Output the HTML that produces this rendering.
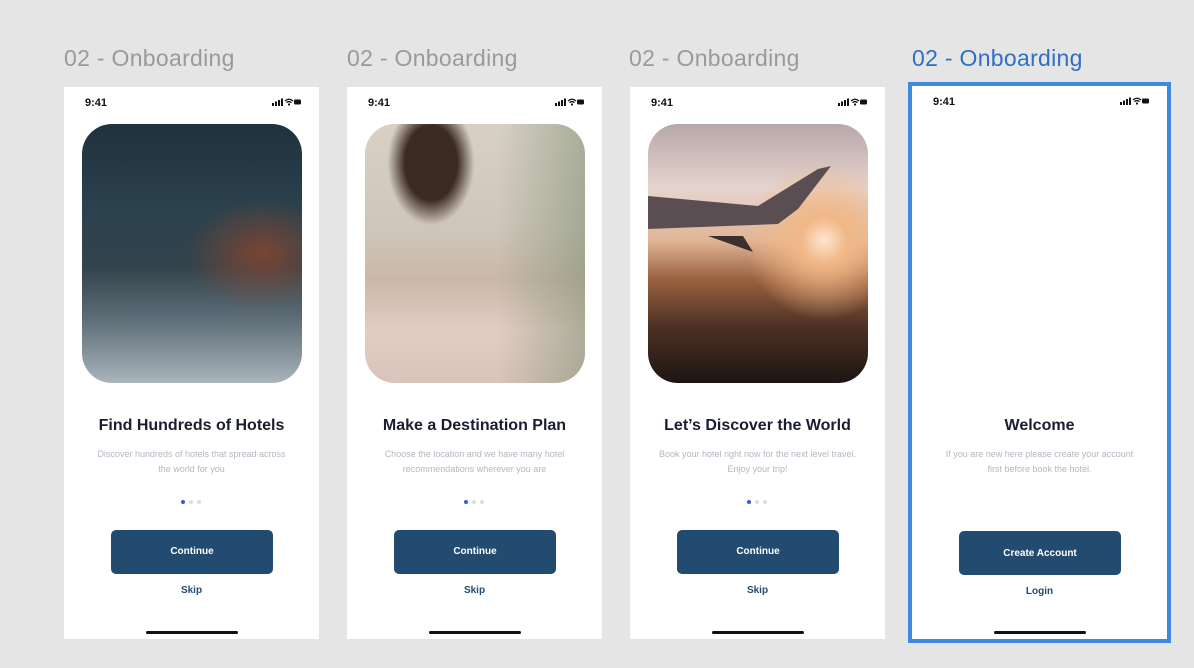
<!DOCTYPE html><html><head><style>
body{margin:0;width:1194px;height:668px;background:#e5e5e5;position:relative;overflow:hidden;font-family:"Liberation Sans",sans-serif}
.lbl{position:absolute;top:45px;font-size:23px;color:#9a9a9a;letter-spacing:0.3px}
.f{position:absolute;top:87px;width:255px;height:552px;background:#fff}
.t{position:absolute;left:21px;top:10px;font-size:11px;font-weight:bold;color:#111}
.st{position:absolute;right:17px;top:11px;width:30px;height:8px}
.img{position:absolute;left:18px;top:37px;width:220px;height:259px;border-radius:30px;overflow:hidden}
.h{position:absolute;left:0;width:100%;top:330px;text-align:center;font-size:16px;font-weight:bold;color:#1a1d2e}
.p{position:absolute;left:27px;right:27px;top:360px;text-align:center;font-size:9px;line-height:15px;color:#b4b6c2}
.dots{position:absolute;left:117px;top:404px}
.dots i{display:inline-block;width:4px;height:4px;border-radius:50%;background:#dcdce4;margin-right:4px}
.dots i:first-child{background:#3a5bd9}
.btn{position:absolute;left:47px;top:443px;width:162px;height:44px;border-radius:5px;background:#234a6f;color:#fff;font-size:10px;font-weight:bold;text-align:center;line-height:44px}
.sk{position:absolute;left:0;width:100%;top:498px;text-align:center;font-size:10px;font-weight:bold;color:#234a6f}
.hb{position:absolute;left:82px;top:544px;width:92px;height:3px;border-radius:2px;background:#111}
</style></head><body>
<svg width="0" height="0" style="position:absolute"><defs><symbol id="s" viewBox="0 0 30 8"><rect x="0" y="5" width="2" height="3" fill="#111"/><rect x="3" y="3.5" width="2" height="4.5" fill="#111"/><rect x="6" y="2" width="2" height="6" fill="#111"/><rect x="9" y="0.5" width="2" height="7.5" fill="#111"/><path d="M13 3 Q17 -0.5 21 3 M14.5 4.6 Q17 2.5 19.5 4.6" stroke="#111" stroke-width="1.3" fill="none"/><circle cx="17" cy="6.5" r="1.1" fill="#111"/><rect x="22" y="1.5" width="7" height="5" rx="1.2" fill="#111"/></symbol></defs></svg>

<div class="lbl" style="left:64px">02 - Onboarding</div>
<div class="lbl" style="left:347px">02 - Onboarding</div>
<div class="lbl" style="left:629px">02 - Onboarding</div>
<div class="lbl" style="left:912px;color:#2f6fc5">02 - Onboarding</div>

<div class="f" style="left:64px"><div class="t">9:41</div><svg class="st"><use href="#s"/></svg>
<div class="img" style="background:radial-gradient(ellipse at 82% 50%,rgba(170,70,35,.6),transparent 30%),linear-gradient(180deg,#1f323d 0%,#2c424d 35%,#33434c 55%,#5d6c76 75%,#a9b4bb 100%)"></div>
<div class="h">Find Hundreds of Hotels</div><div class="p">Discover hundreds of hotels that spread across the world for you</div>
<div class="dots"><i></i><i></i><i></i></div><div class="btn">Continue</div><div class="sk">Skip</div><div class="hb"></div></div>

<div class="f" style="left:347px"><div class="t">9:41</div><svg class="st"><use href="#s"/></svg>
<div class="img" style="background:radial-gradient(ellipse at 30% 15%,#3b2a22 0,#3b2a22 12%,transparent 20%),linear-gradient(90deg,rgba(0,0,0,0) 60%,rgba(120,140,110,.5) 100%),linear-gradient(180deg,#d8d0c6 0%,#cfc6bb 40%,#c9b8a8 60%,#e2cdc4 80%,#d9c4bb 100%)"></div>
<div class="h">Make a Destination Plan</div><div class="p">Choose the location and we have many hotel recommendations wherever you are</div>
<div class="dots"><i></i><i></i><i></i></div><div class="btn">Continue</div><div class="sk">Skip</div><div class="hb"></div></div>

<div class="f" style="left:630px"><div class="t">9:41</div><svg class="st"><use href="#s"/></svg>
<div class="img" style="background:radial-gradient(circle at 80% 45%,#fde6d0 0,#f1b888 10%,transparent 35%),linear-gradient(180deg,#b8a7a8 0%,#e6d4cf 25%,#e0b595 45%,#9a6140 60%,#4d3124 78%,#1e1513 100%)">
<svg width="220" height="259" style="position:absolute;left:0;top:0"><path d="M0 72 L110 82 L170 45 L183 42 L150 85 L130 100 L0 105Z" fill="#5a4e52"/><path d="M60 112 L95 112 L105 128 Z" fill="#3a302e"/></svg></div>
<div class="h">Let’s Discover the World</div><div class="p">Book your hotel right now for the next level travel. Enjoy your trip!</div>
<div class="dots"><i></i><i></i><i></i></div><div class="btn">Continue</div><div class="sk">Skip</div><div class="hb"></div></div>

<div style="position:absolute;left:908px;top:82px;width:255px;height:553px;border:4px solid #3d8ae0"></div>
<div class="f" style="left:912px;top:86px;height:553px"><div class="t">9:41</div><svg class="st"><use href="#s"/></svg>
<div class="h" style="top:331px">Welcome</div><div class="p" style="top:361px">If you are new here please create your account first before book the hotel.</div>
<div class="btn" style="top:445px;line-height:46px">Create Account</div><div class="sk" style="top:500px">Login</div><div class="hb" style="top:545px"></div></div>
</body></html>
